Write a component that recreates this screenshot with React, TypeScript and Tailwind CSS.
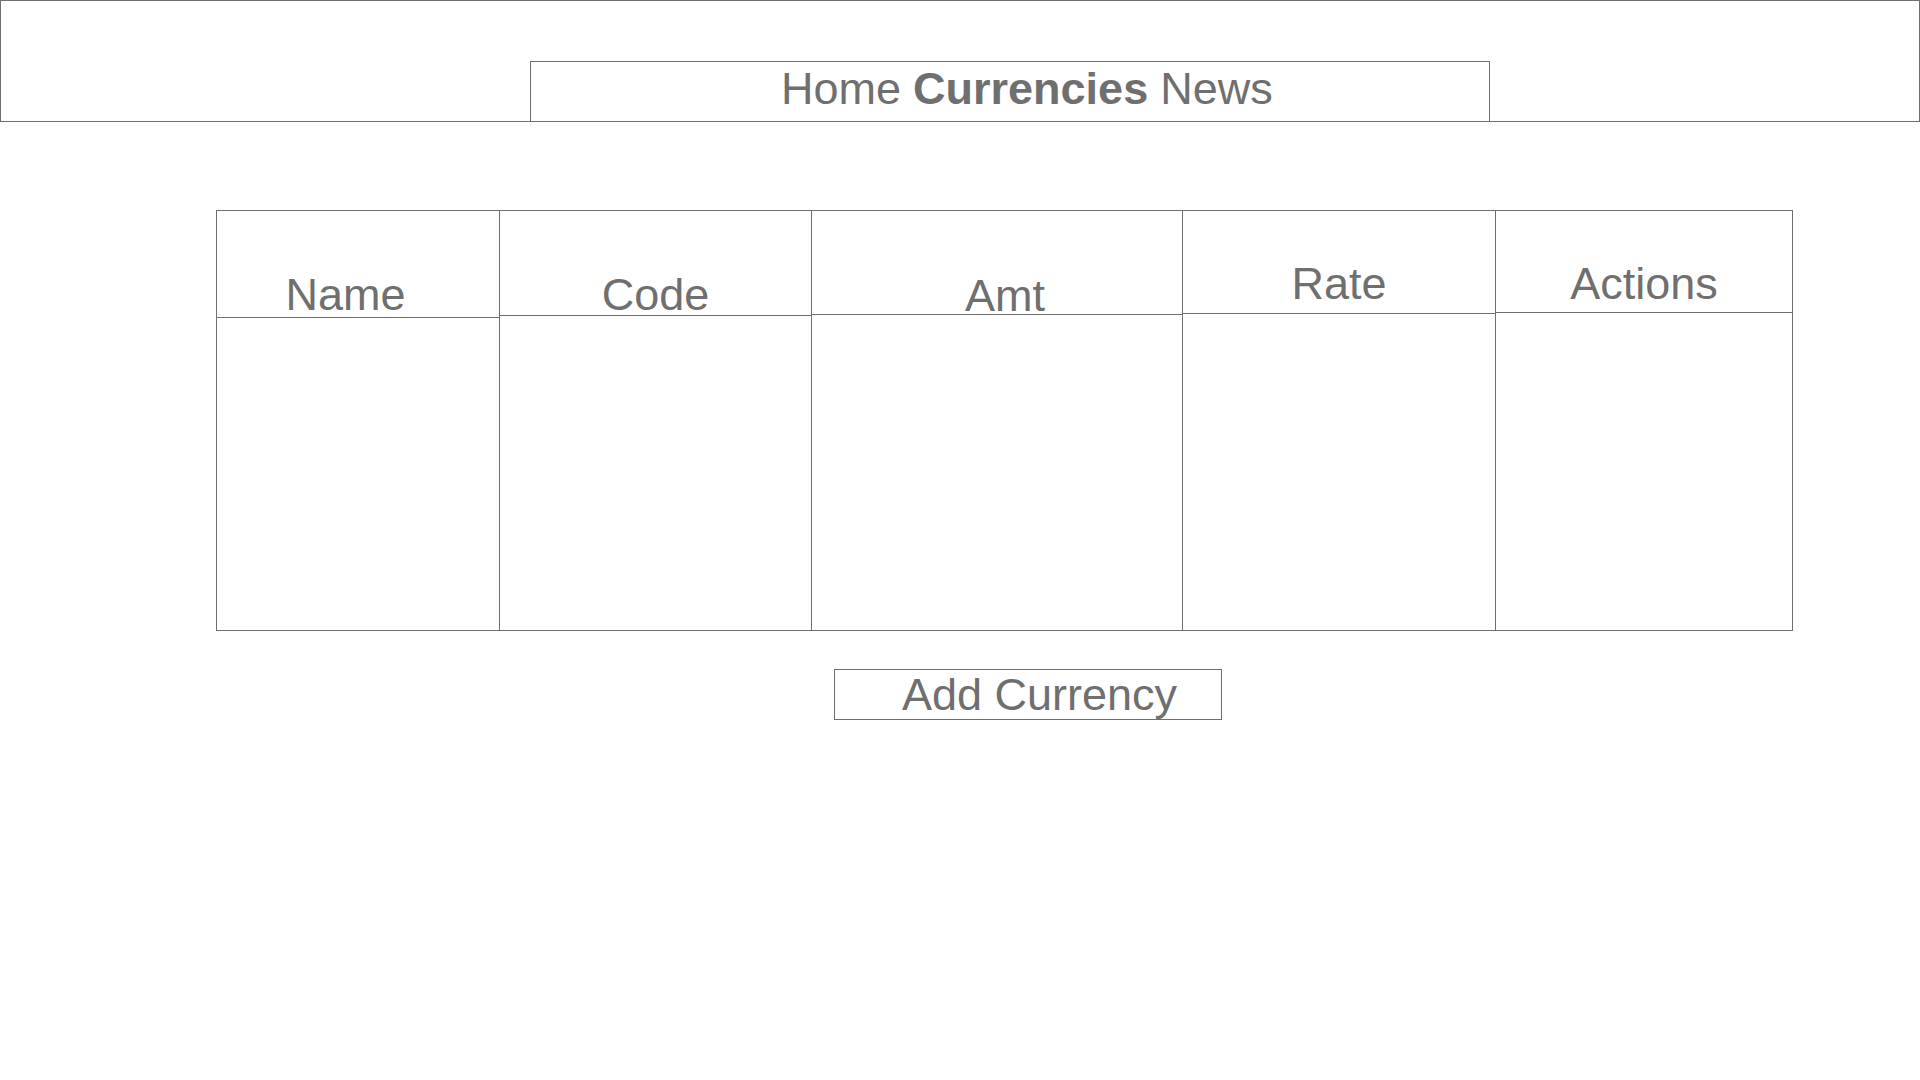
const columns = [
  { label: 'Name', width: 'w-[282px]', head: 'h-[107px]', text: 'pr-[25px] leading-[45px]' },
  { label: 'Code', width: 'w-[312px]', head: 'h-[105px]', text: 'leading-[41px]' },
  { label: 'Amt', width: 'w-[371px]', head: 'h-[104px]', text: 'pl-[16px] leading-[37px]' },
  { label: 'Rate', width: 'w-[313px]', head: 'h-[103px]', text: 'pb-[7px] leading-[45px]' },
  { label: 'Actions', width: 'flex-1', head: 'h-[102px]', text: 'pb-[6px] leading-[45px]' },
]

export default function App() {
  return (
    <div className="min-h-screen w-[1920px] bg-white text-[#6f6f6f] font-['Liberation_Sans',Arial,sans-serif]">
      <header className="h-[122px] border border-[#6f6f6f] flex items-end pl-[529px]">
        <nav className="w-[960px] h-[60px] border-t border-l border-r border-[#6f6f6f] flex items-start pt-[4px] pl-[250px] text-[45px] leading-[45px]">
          <span>Home</span>
          <span className="font-bold ml-[12px]">Currencies</span>
          <span className="ml-[12px]">News</span>
        </nav>
      </header>

      <div className="mt-[88px] ml-[216px] w-[1577px] h-[421px] border border-[#6f6f6f] flex">
        {columns.map((col, i) => (
          <div
            key={col.label}
            className={`${col.width} flex flex-col ${i > 0 ? 'border-l border-[#6f6f6f]' : ''}`}
          >
            <div
              className={`${col.head} border-b border-[#6f6f6f] flex items-end justify-center text-[45px] ${col.text}`}
            >
              {col.label}
            </div>
            <div className="flex-1" />
          </div>
        ))}
      </div>

      <button className="mt-[38px] ml-[834px] w-[388px] h-[51px] border border-[#6f6f6f] flex items-start pt-[2px] pl-[67px] text-[45px] leading-[45px] text-[#6f6f6f]">
        Add Currency
      </button>
    </div>
  )
}
